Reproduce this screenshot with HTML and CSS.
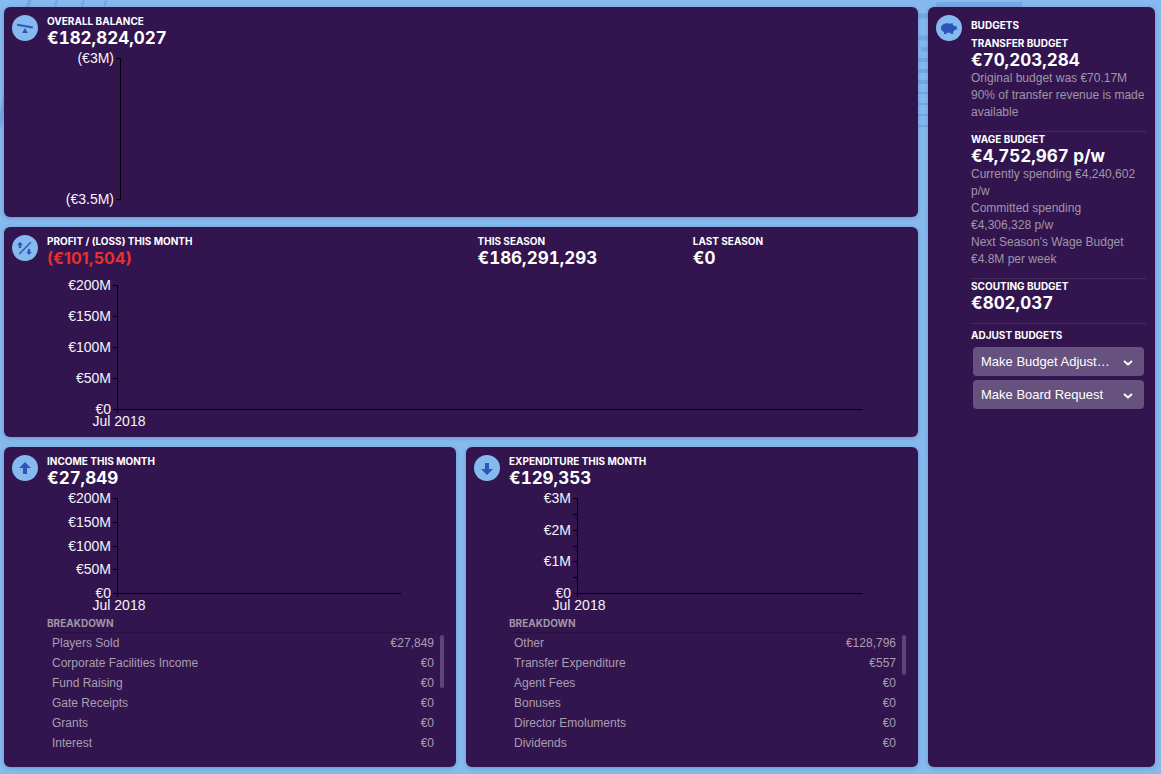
FILE: index.html
```html
<!DOCTYPE html>
<html lang="en">
<head>
<meta charset="utf-8">
<title>Finances</title>
<link rel="stylesheet" href="styles.css">
</head>
<body>
<svg class="backdrop" aria-hidden="true">
  <g fill="none" stroke="#77a8e5">
    <path d="M30 0C20 24 8 72 0 127" stroke-width="4"/>
    <path d="M57 0L40 60M84 0L66 60M106 0L90 60" stroke-width="2"/>
    <path d="M918 16h10M918 38h10M921 49h7" stroke-width="5"/>
    <path d="M918 60h10M918 71h10M918 82h10" stroke-width="4"/>
    <path d="M918 93h10M918 104h10M918 115h10M918 126h10" stroke-width="2"/>
    <path d="M937 2H1023L1021 8H935z" fill="#77a8e5" stroke="none"/>
  </g>
</svg>
<main class="page">
  <section class="panel balance">
    <svg class="icon" viewBox="0 0 26 26" aria-hidden="true"><circle class="disc" cx="13" cy="13" r="13"/><path class="glyph" d="M5.400 8.700L21 11.500L20.600 13.500L5 10.700zM13 13L15.900 18H10.100z"/></svg>
    <div class="content">
      <h2>OVERALL BALANCE</h2>
      <p class="value">€182,824,027</p>
      <svg class="chart chart-balance" role="img" aria-label="Overall balance chart">
        <path class="axis" d="M69 10.500H73.500V151.500H69"/>
        <text class="y" x="67" y="15">(€3M)</text>
        <text class="y" x="67" y="156">(€3.5M)</text>
      </svg>
    </div>
  </section>

  <section class="panel profit">
    <svg class="icon" viewBox="0 0 26 26" aria-hidden="true"><circle class="disc" cx="13" cy="13" r="13"/><path class="stroke" d="M7.200 19L18.800 7.200"/><path class="glyph" d="M8 6.800L10.800 10H9.200V13H6.800V10H5.200zM17 20L14.200 17H15.800V14H18.200V17H19.800z"/></svg>
    <div class="content">
      <div class="summary">
        <div><h2>PROFIT / (LOSS) THIS MONTH</h2><p class="value loss">(€101,504)</p></div>
        <div><h2>THIS SEASON</h2><p class="value">€186,291,293</p></div>
        <div><h2>LAST SEASON</h2><p class="value">€0</p></div>
      </div>
      <svg class="chart chart-profit" role="img" aria-label="Profit and loss chart">
        <path class="axis" d="M66 17.500H70.500V145M66 48.500h4M66 79.500h4M66 110.500h4M66 141.500h4"/>
        <line class="axis" x1="70" x2="100%" y1="141.500" y2="141.500"/>
        <text class="y" x="64" y="22">€200M</text>
        <text class="y" x="64" y="53">€150M</text>
        <text class="y" x="64" y="84">€100M</text>
        <text class="y" x="64" y="115">€50M</text>
        <text class="y" x="64" y="146">€0</text>
        <text class="x" x="72" y="158">Jul 2018</text>
      </svg>
    </div>
  </section>

  <section class="panel income">
    <svg class="icon" viewBox="0 0 26 26" aria-hidden="true"><circle class="disc" cx="13" cy="13" r="13"/><path class="glyph" d="M13 7L19 13H15V19H11V13H7z"/></svg>
    <div class="content">
      <h2>INCOME THIS MONTH</h2>
      <p class="value">€27,849</p>
      <svg class="chart chart-flow" role="img" aria-label="Income chart">
        <path class="axis" d="M66 10.500H70.500V109M66 34.500h4M66 58.500h4M66 81.500h4M66 105.500h4"/>
        <line class="axis" x1="70" x2="100%" y1="105.500" y2="105.500"/>
        <text class="y" x="64" y="15">€200M</text>
        <text class="y" x="64" y="39">€150M</text>
        <text class="y" x="64" y="63">€100M</text>
        <text class="y" x="64" y="86">€50M</text>
        <text class="y" x="64" y="110">€0</text>
        <text class="x" x="72" y="122">Jul 2018</text>
      </svg>
      <h3>BREAKDOWN</h3>
      <div class="list">
        <table>
          <tbody>
            <tr><td>Players Sold</td><td>€27,849</td></tr>
            <tr><td>Corporate Facilities Income</td><td>€0</td></tr>
            <tr><td>Fund Raising</td><td>€0</td></tr>
            <tr><td>Gate Receipts</td><td>€0</td></tr>
            <tr><td>Grants</td><td>€0</td></tr>
            <tr><td>Interest</td><td>€0</td></tr>
          </tbody>
        </table>
        <div class="thumb thumb-long"></div>
      </div>
    </div>
  </section>

  <section class="panel expenditure">
    <svg class="icon" viewBox="0 0 26 26" aria-hidden="true"><circle class="disc" cx="13" cy="13" r="13"/><path class="glyph" d="M13 20L7 14H11V8H15V14H19z"/></svg>
    <div class="content">
      <h2>EXPENDITURE THIS MONTH</h2>
      <p class="value">€129,353</p>
      <svg class="chart chart-flow" role="img" aria-label="Expenditure chart">
        <path class="axis" d="M64 10.500H68.500V109M64 26.500h4M64 42.500h4M64 58.500h4M64 73.500h4M64 89.500h4M64 105.500h4"/>
        <line class="axis" x1="68" x2="100%" y1="105.500" y2="105.500"/>
        <text class="y" x="62" y="15">€3M</text>
        <text class="y" x="62" y="47">€2M</text>
        <text class="y" x="62" y="78">€1M</text>
        <text class="y" x="62" y="110">€0</text>
        <text class="x" x="70" y="122">Jul 2018</text>
      </svg>
      <h3>BREAKDOWN</h3>
      <div class="list">
        <table>
          <tbody>
            <tr><td>Other</td><td>€128,796</td></tr>
            <tr><td>Transfer Expenditure</td><td>€557</td></tr>
            <tr><td>Agent Fees</td><td>€0</td></tr>
            <tr><td>Bonuses</td><td>€0</td></tr>
            <tr><td>Director Emoluments</td><td>€0</td></tr>
            <tr><td>Dividends</td><td>€0</td></tr>
          </tbody>
        </table>
        <div class="thumb"></div>
      </div>
    </div>
  </section>

  <aside class="panel budgets">
    <svg class="icon" viewBox="0 0 26 26" aria-hidden="true"><circle class="disc" cx="13" cy="13" r="13"/><path class="glyph" d="M5 13C5 10 8 8.200 11.500 8.200C13 8.200 14 8.400 15 8.700L16.600 7.400V9.500L18.600 11.200H20.800V14.800H19.200L17.200 16.800V19H14.800V17.800H10.600V19H8V17C6 16.200 5 15 5 13z"/></svg>
    <div class="content">
      <h2 class="heading">BUDGETS</h2>
      <section class="budget">
        <h2>TRANSFER BUDGET</h2>
        <p class="value">€70,203,284</p>
        <p>Original budget was €70.17M</p>
        <p>90% of transfer revenue is made available</p>
      </section>
      <section class="budget">
        <h2>WAGE BUDGET</h2>
        <p class="value">€4,752,967 p/w</p>
        <p>Currently spending €4,240,602 p/w</p>
        <p>Committed spending<br>€4,306,328 p/w</p>
        <p>Next Season's Wage Budget €4.8M per week</p>
      </section>
      <section class="budget">
        <h2>SCOUTING BUDGET</h2>
        <p class="value">€802,037</p>
      </section>
      <h2 class="heading" id="adjust">ADJUST BUDGETS</h2>
      <div class="actions">
        <div class="picker">
          <select aria-labelledby="adjust"><option>Make Budget Adjustment</option></select>
          <svg class="chevron" viewBox="0 0 10 6" aria-hidden="true"><path d="M1 1L5 4.500L9 1"/></svg>
        </div>
        <div class="picker">
          <select aria-labelledby="adjust"><option>Make Board Request</option></select>
          <svg class="chevron" viewBox="0 0 10 6" aria-hidden="true"><path d="M1 1L5 4.500L9 1"/></svg>
        </div>
      </div>
    </div>
  </aside>
</main>
</body>
</html>
```
FILE: styles.css
```css
* { box-sizing: border-box; }

body {
  margin: 0;
  background: #86baef;
  color: #fff;
  font: 12px/17px "Liberation Sans", Arial, sans-serif;
}

h2, h3, p { margin: 0; }

.backdrop {
  position: absolute;
  top: 0;
  left: 0;
  width: 100%;
  height: 140px;
}

.page {
  position: relative;
  display: grid;
  grid-template-columns: 1fr 1fr 227px;
  grid-template-rows: 210px 210px 1fr;
  gap: 10px;
  min-height: 100vh;
  padding: 7px 6px 7px 4px;
}

.panel {
  display: flex;
  gap: 9px;
  min-width: 0;
  padding: 7px 12px 8px 8px;
  border-radius: 6px;
  background: #32154f;
  box-shadow: 0 1px 4px rgba(50, 60, 110, 0.3);
}

.balance, .profit { grid-column: 1 / 3; }
.income { grid-column: 1; grid-row: 3; }
.expenditure { grid-column: 2; grid-row: 3; }
.budgets { grid-column: 3; grid-row: 1 / 4; padding-right: 9px; }

.icon { flex: none; width: 26px; height: 26px; margin-top: 1px; }
.disc { fill: #86baef; }
.glyph { fill: #2e55b8; }
.stroke { fill: none; stroke: #2e55b8; stroke-width: 1.400; }

.content { flex: 1; min-width: 0; }

h2, h3 {
  font: 700 10px/14px Inter, "Liberation Sans", sans-serif;
  white-space: nowrap;
}

.value {
  color: #fff;
  font: 700 17px/20px Inter, "Liberation Sans", sans-serif;
  font-variant-numeric: tabular-nums;
}

.loss {
  color: #e8302f;
  font-size: 16px;
  font-variant-numeric: normal;
}

.summary { display: grid; grid-template-columns: 2fr 1fr 1fr; margin-right: -2px; }

.chart {
  display: block;
  width: calc(100% - 43px);
  overflow: visible;
}
.chart-balance { height: 160px; }
.chart-profit { height: 160px; }
.chart-flow { height: 127px; }
.chart text { fill: #f6f3f8; font-size: 14px; }
.chart .y { text-anchor: end; }
.chart .x { text-anchor: middle; }
.axis { fill: none; stroke: #000; stroke-width: 1; }

h3 {
  height: 18px;
  margin-right: 9px;
  padding-top: 1px;
  border-bottom: 1px solid #291040;
  color: #a096a6;
}

.list { display: flex; gap: 5px; height: 126px; overflow: hidden; }
table { flex: 1; border-collapse: collapse; align-self: flex-start; color: #a99eae; }
td { height: 20px; padding: 0 1px 0 5px; line-height: 20px; }
td:last-child { text-align: right; }

.thumb {
  width: 4px;
  height: 40px;
  margin-top: 2px;
  border-radius: 2px;
  background: #5d4577;
}
.thumb-long { height: 53px; }

.heading { margin: 4px 0; }

.budget {
  padding-bottom: 10px;
  border-bottom: 1px solid #452b60;
  color: #a096a6;
}
.budget h2 { color: #fff; }

.actions { display: grid; gap: 4px; margin: 5px 2px 0; }
.picker { position: relative; }
select {
  display: block;
  width: 100%;
  height: 29px;
  padding: 0 32px 0 8px;
  border: 0;
  border-radius: 4px;
  appearance: none;
  background: #66517f;
  color: #fff;
  font: 13px "Liberation Sans", Arial, sans-serif;
  text-overflow: ellipsis;
}
.chevron {
  position: absolute;
  top: 13px;
  right: 11px;
  width: 10px;
  height: 6px;
  fill: none;
  stroke: #fff;
  stroke-width: 2;
  pointer-events: none;
}
```
